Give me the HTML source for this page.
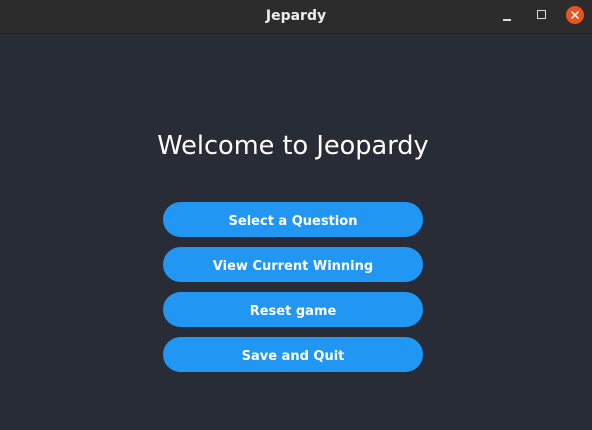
<!DOCTYPE html>
<html><head><style>
body{margin:0;width:592px;height:430px;background:#272c36;font-family:"DejaVu Sans",sans-serif;position:relative;overflow:hidden}
.tb{position:absolute;left:0;top:0;width:592px;height:33px;background:#2c2c2c;border-bottom:1px solid #222}
.tt{position:absolute;left:0;width:592px;top:8px;text-align:center;color:#eee;font-weight:bold;font-size:14px}
h1{position:absolute;left:0;width:586px;top:131px;margin:0;text-align:center;color:#fff;font-weight:normal;font-size:25.6px}
.b{position:absolute;left:163px;width:260px;height:35px;border-radius:18px;background:#2196f3;color:#fff;font-weight:bold;font-size:13px;text-align:center;line-height:39px}
</style></head><body>
<div class="tb"><div class="tt">Jepardy</div>
<div style="position:absolute;left:503px;top:19px;width:8px;height:1.5px;background:#ddd"></div>
<div style="position:absolute;left:537px;top:10px;width:7px;height:7px;border:1.5px solid #ddd"></div>
<div style="position:absolute;left:566px;top:6px;width:18px;height:18px;border-radius:50%;background:#e95420"></div>
<svg style="position:absolute;left:566px;top:6px" width="18" height="18"><path d="M5.5 5.5L12.5 12.5M12.5 5.5L5.5 12.5" stroke="#fff" stroke-width="1.5"/></svg>
</div>
<h1>Welcome to Jeopardy</h1>
<div class="b" style="top:202px">Select a Question</div>
<div class="b" style="top:247px">View Current Winning</div>
<div class="b" style="top:292px">Reset game</div>
<div class="b" style="top:337px">Save and Quit</div>
</body></html>
